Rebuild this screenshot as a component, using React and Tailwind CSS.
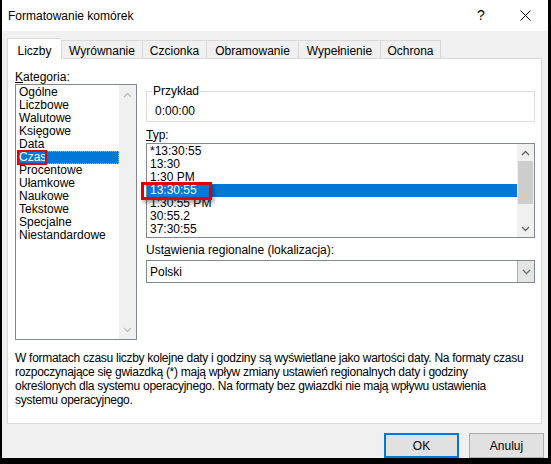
import React from 'react';

const cats = ['Ogólne', 'Liczbowe', 'Walutowe', 'Księgowe', 'Data', 'Czas', 'Procentowe', 'Ułamkowe', 'Naukowe', 'Tekstowe', 'Specjalne', 'Niestandardowe'];
const types = ['*13:30:55', '13:30', '1:30 PM', '13:30:55', '1:30:55 PM', '30:55.2', '37:30:55'];

const tabs = [
  { label: 'Liczby', w: 'w-[54px]', active: true },
  { label: 'Wyrównanie', w: 'w-[81px]' },
  { label: 'Czcionka', w: 'w-[64px]' },
  { label: 'Obramowanie', w: 'w-[92px]' },
  { label: 'Wypełnienie', w: 'w-[82px]' },
  { label: 'Ochrona', w: 'w-[61px] border-r' },
];

function ChevUp({ color = '#606060' }) {
  return (
    <svg width="9" height="6" viewBox="0 0 9 6">
      <polyline points="1,5 4.5,1.5 8,5" fill="none" stroke={color} strokeWidth="1.3" />
    </svg>
  );
}

function ChevDown({ color = '#606060' }) {
  return (
    <svg width="9" height="6" viewBox="0 0 9 6">
      <polyline points="1,1 4.5,4.5 8,1" fill="none" stroke={color} strokeWidth="1.3" />
    </svg>
  );
}

export default function App() {
  return (
    <div className="w-[551px] h-[464px] bg-black pl-[2px] pr-[3px] pb-[6px] flex flex-col font-['Liberation_Sans',Arial,sans-serif] text-[12px] text-black">
      <div className="flex-1 flex flex-col bg-[#f0f0f0]">
        {/* title bar */}
        <div className="h-[31px] bg-white flex items-center pl-[6px]">
          <span className="flex-1">Formatowanie komórek</span>
          <span className="w-[12px] text-center text-[14px] mr-[33px]">?</span>
          <svg width="11" height="11" viewBox="0 0 11 11" className="mr-[17px]">
            <path d="M0.5 0.5 L10.5 10.5 M10.5 0.5 L0.5 10.5" stroke="#000" strokeWidth="1" />
          </svg>
        </div>

        {/* tabs */}
        <div className="flex items-end ml-[5px] mt-[7px]">
          {tabs.map((t) =>
            t.active ? (
              <div key={t.label} className={`${t.w} h-[21px] -mb-[1px] relative z-10 bg-white border-t border-l border-[#d9d9d9] pt-[5px] leading-[14px] text-center`}>
                {t.label}
              </div>
            ) : (
              <div key={t.label} className={`${t.w} h-[18px] border-t border-l border-[#d9d9d9] pt-[3px] leading-[14px] text-center`}>
                {t.label}
              </div>
            )
          )}
        </div>

        {/* panel */}
        <div className="ml-[5px] mr-[6px] h-[366px] bg-white border border-[#d9d9d9] pl-[7px] pt-[11px]">
          <div className="flex gap-[9px]">
            {/* left column */}
            <div className="w-[122px] flex flex-col">
              <div className="h-[14px] leading-[14px]">
                <span className="underline">K</span>ategoria:
              </div>
              <div className="h-[256px] border border-[#828790] flex">
                <div className="flex-1 pt-[1px]">
                  {cats.map((c) =>
                    c === 'Czas' ? (
                      <div key={c} className="relative ml-[1px] h-[13px] leading-[13px] pl-[2px] bg-[#0078d7] text-white outline outline-1 outline-dotted outline-[#e8a25a] -outline-offset-1">
                        {c}
                        <div className="absolute left-[0px] -top-[1px] w-[30px] h-[15px] border-2 border-[#e00000]" />
                      </div>
                    ) : (
                      <div key={c} className="ml-[1px] h-[13px] leading-[13px] pl-[2px]">
                        {c}
                      </div>
                    )
                  )}
                </div>
                <div className="w-[17px] bg-[#f0f0f0] flex flex-col items-center justify-between pt-[7px] pb-[6px]">
                  <ChevUp color="#c0c0c0" />
                  <ChevDown color="#c0c0c0" />
                </div>
              </div>
            </div>

            {/* right column */}
            <div className="w-[389px] flex flex-col">
              <fieldset className="mt-[14px] border border-[#dcdcdc] pb-[3px]">
                <legend className="ml-[5px] px-[1px] leading-[14px]">Przykład</legend>
                <div className="mt-[6px] pl-[8px] h-[14px] leading-[14px]">0:00:00</div>
              </fieldset>

              <div className="mt-[6px] h-[14px] leading-[14px]">
                <span className="underline">T</span>yp:
              </div>
              <div className="mt-[1px] h-[95px] border border-[#828790] flex">
                <div className="flex-1 pt-[1px]">
                  {types.map((t, i) =>
                    i === 3 ? (
                      <div key={i} className="relative h-[13px] leading-[13px] pl-[3px] bg-[#0078d7] text-white">
                        {t}
                        <div className="absolute -left-[6px] -top-[2px] w-[71px] h-[18px] border-[3px] border-[#e00000] shadow-[2px_3px_4px_rgba(0,0,0,0.35)]" />
                      </div>
                    ) : (
                      <div key={i} className="h-[13px] leading-[13px] pl-[3px]">
                        {t}
                      </div>
                    )
                  )}
                </div>
                <div className="w-[17px] bg-[#f0f0f0] flex flex-col items-center">
                  <div className="h-[17px] flex items-center justify-center">
                    <ChevUp />
                  </div>
                  <div className="w-[15px] h-[43px] bg-[#cdcdcd]" />
                  <div className="flex-1" />
                  <div className="h-[17px] flex items-center justify-center">
                    <ChevDown />
                  </div>
                </div>
              </div>

              <div className="mt-[5px] h-[14px] leading-[14px]">
                Ust<span className="underline">a</span>wienia regionalne (lokalizacja):
              </div>
              <div className="mt-[3px] h-[23px] border border-[#828790] flex items-center">
                <div className="flex-1 pl-[3px] leading-[14px]">Polski</div>
                <div className="w-[17px] h-full bg-[#e5e5e5] border-l border-[#adadad] flex items-center justify-center">
                  <ChevDown color="#707070" />
                </div>
              </div>
            </div>
          </div>

          <div className="mt-[11px] leading-[14px] whitespace-nowrap tracking-[-0.28px]">
            W formatach czasu liczby kolejne daty i godziny są wyświetlane jako wartości daty. Na formaty czasu
            <br />
            rozpoczynające się gwiazdką (*) mają wpływ zmiany ustawień regionalnych daty i godziny
            <br />
            określonych dla systemu operacyjnego. Na formaty bez gwiazdki nie mają wpływu ustawienia
            <br />
            systemu operacyjnego.
          </div>
        </div>

        {/* buttons */}
        <div className="flex justify-end gap-[10px] mt-[9px] pr-[4px]">
          <button className="w-[75px] h-[25px] bg-[#e1e1e1] border-2 border-[#0078d7]">OK</button>
          <button className="w-[75px] h-[25px] bg-[#e1e1e1] border border-[#adadad]">Anuluj</button>
        </div>
      </div>
    </div>
  );
}
